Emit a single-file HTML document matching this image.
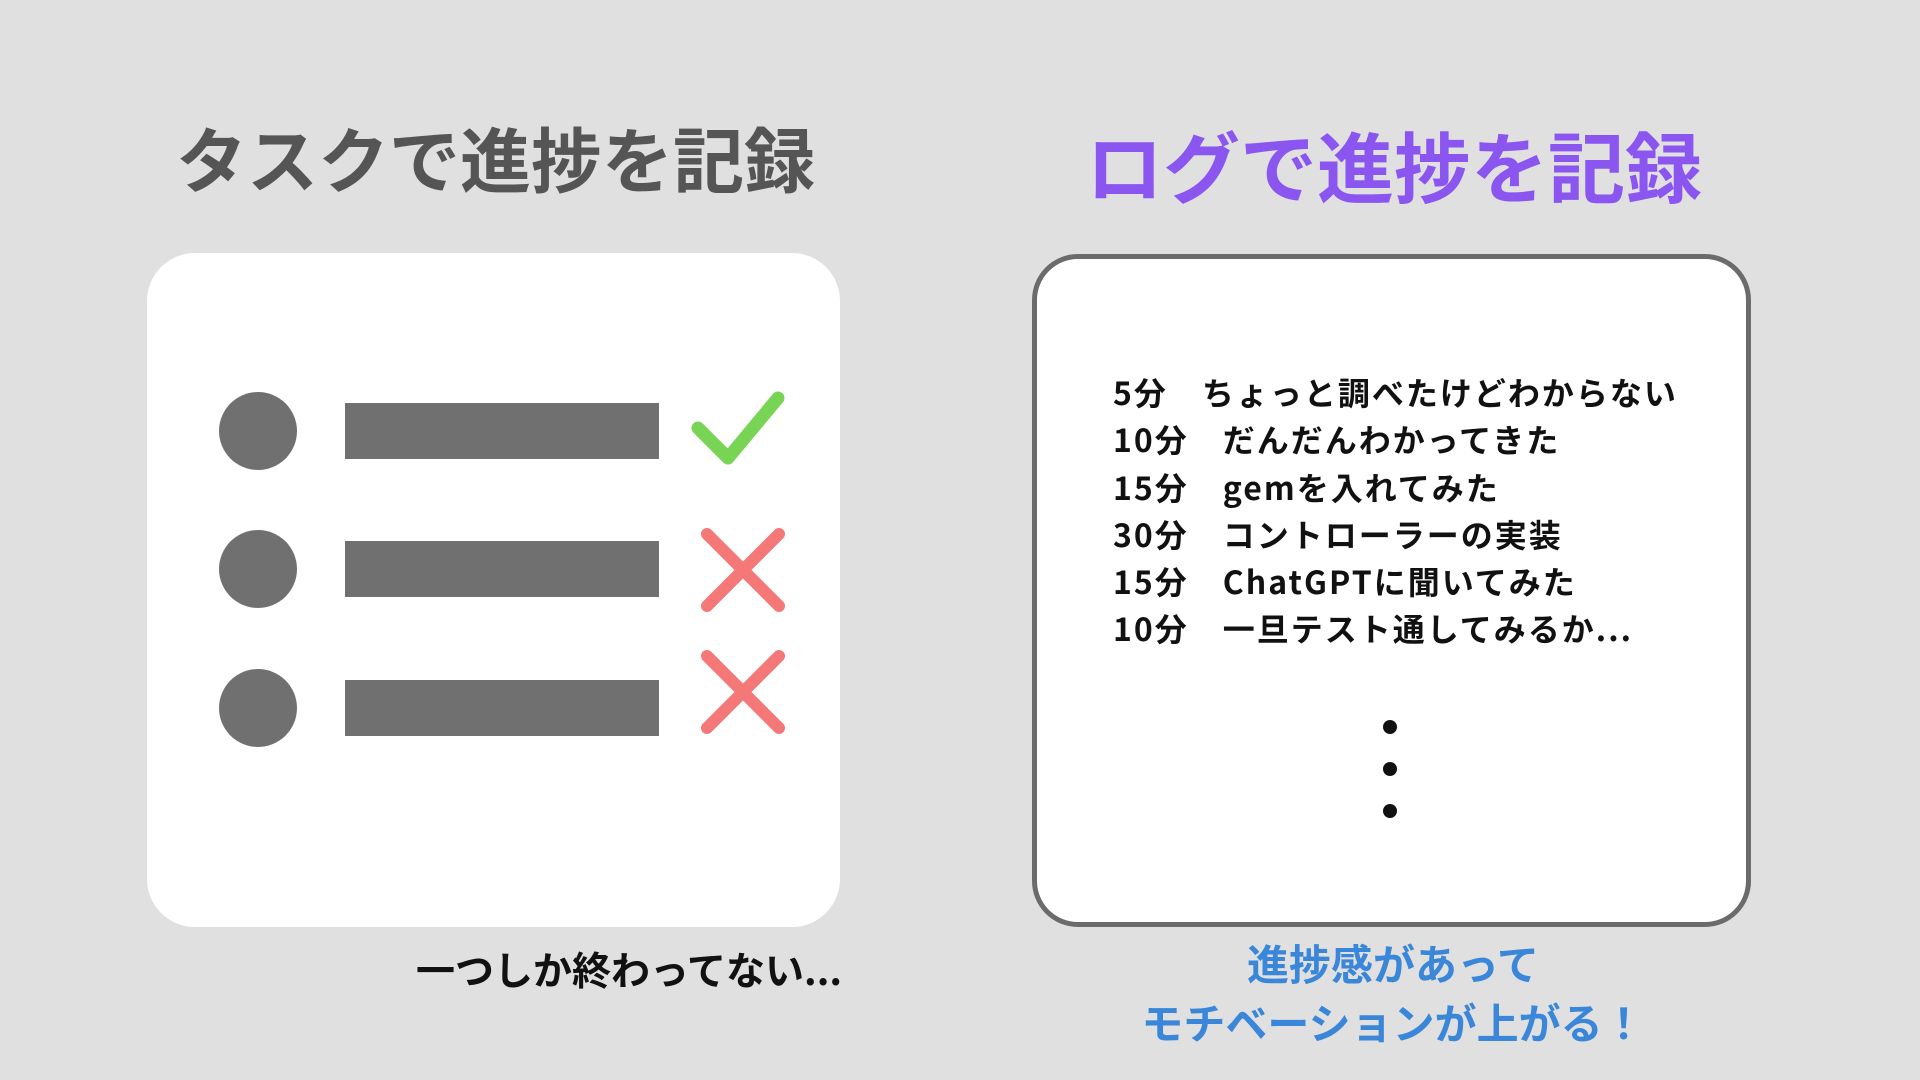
<!DOCTYPE html>
<html><head><meta charset="utf-8"><style>
html,body{margin:0;padding:0;}
body{width:1920px;height:1080px;background:#e0e0e0;position:relative;overflow:hidden;font-family:"Noto Sans CJK JP","Liberation Sans",sans-serif;font-weight:bold;}
.t{position:absolute;white-space:nowrap;line-height:1;}
.card{position:absolute;background:#fff;}
.dot{position:absolute;width:78px;height:78px;border-radius:50%;background:#707070;}
.bar{position:absolute;left:345px;width:314px;height:56px;background:#707070;}
.ld{position:absolute;left:1383px;width:14px;height:14px;border-radius:50%;background:#111;}
.log{position:absolute;left:1113px;top:369px;font-size:32px;letter-spacing:2px;line-height:47.3px;color:#111;white-space:pre;}
</style></head><body>
<div class="t" style="left:176px;top:122px;font-size:71px;color:#555;">タスクで進捗を記録</div>
<div class="t" style="left:1086px;top:126px;font-size:77px;color:#8b55f0;">ログで進捗を記録</div>

<div class="card" style="left:147px;top:253px;width:693px;height:674px;border-radius:48px;"></div>
<div class="dot" style="left:219px;top:392px;"></div>
<div class="dot" style="left:219px;top:530px;"></div>
<div class="dot" style="left:219px;top:669px;"></div>
<div class="bar" style="top:403px;"></div>
<div class="bar" style="top:541px;"></div>
<div class="bar" style="top:680px;"></div>
<svg style="position:absolute;left:0;top:0" width="1920" height="1080">
<polyline points="698,428 728,458 778,398" fill="none" stroke="#77d455" stroke-width="13" stroke-linecap="round" stroke-linejoin="round"/>
<g stroke="#f47878" stroke-width="12" stroke-linecap="round">
<line x1="707" y1="534" x2="779" y2="606"/><line x1="779" y1="534" x2="707" y2="606"/>
<line x1="707" y1="656" x2="779" y2="728"/><line x1="779" y1="656" x2="707" y2="728"/>
</g></svg>
<div class="t" style="left:416px;top:950px;font-size:39px;color:#111;">一つしか終わってない...</div>

<div class="card" style="left:1032px;top:254px;width:709px;height:663px;border:5px solid #6b6b6b;border-radius:46px;"></div>
<div class="log">5分　ちょっと調べたけどわからない
10分　だんだんわかってきた
15分　gemを入れてみた
30分　コントローラーの実装
15分　ChatGPTに聞いてみた
10分　一旦テスト通してみるか...</div>
<div class="ld" style="top:720px;"></div>
<div class="ld" style="top:762px;"></div>
<div class="ld" style="top:804px;"></div>
<div class="t" style="left:0;width:2786px;text-align:center;top:942px;font-size:42px;color:#3a86d8;">進捗感があって</div>
<div class="t" style="left:0;width:2786px;text-align:center;top:1001px;font-size:42px;color:#3a86d8;">モチベーションが上がる！</div>
</body></html>
